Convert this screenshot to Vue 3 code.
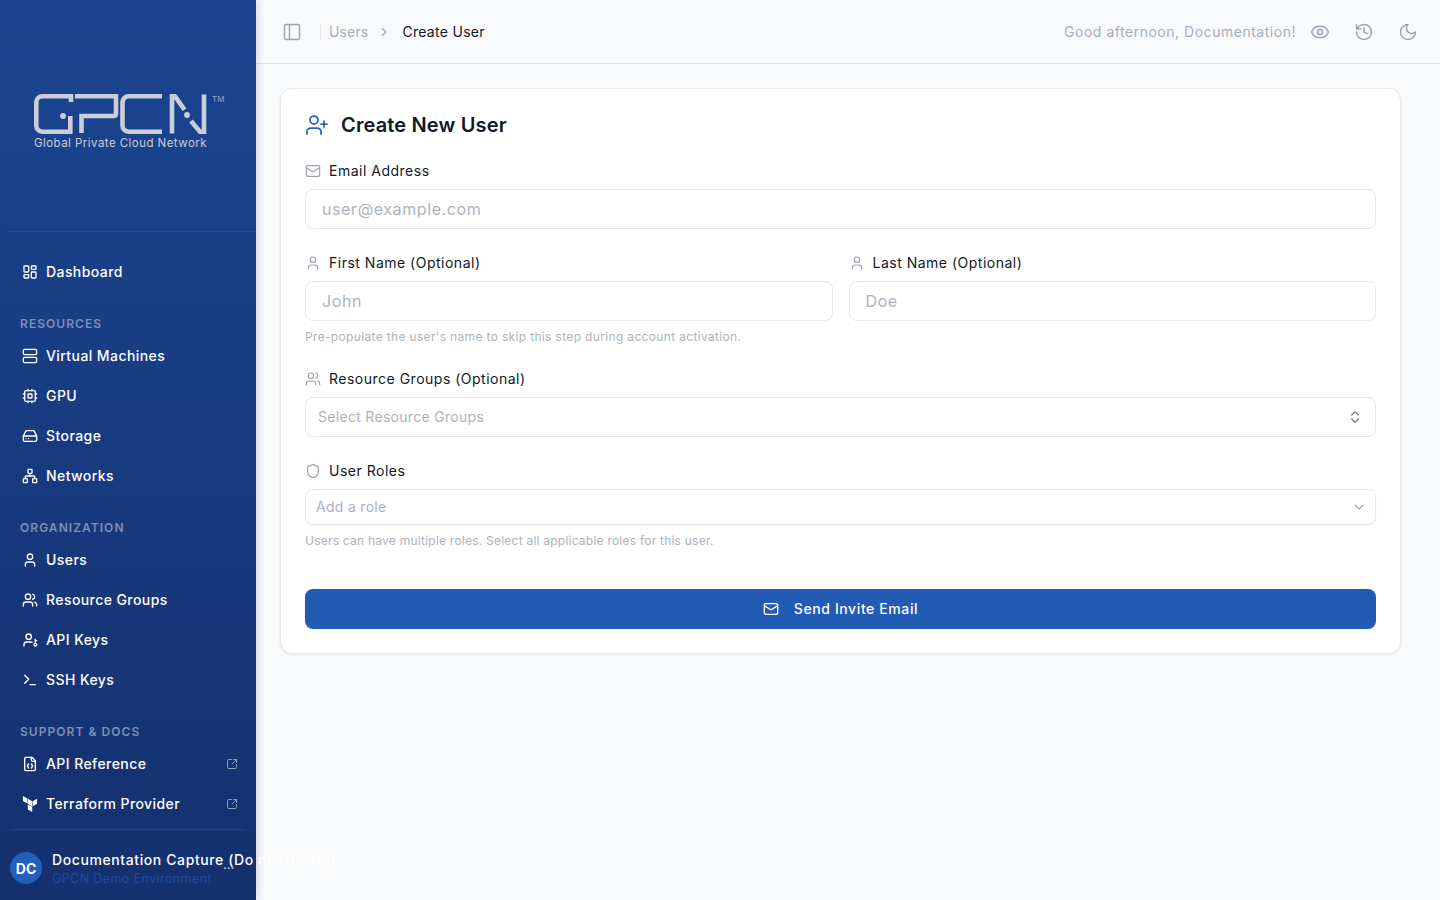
<script setup>
const icons = {
  panel: '<rect x="3" y="3" width="18" height="18" rx="2"/><path d="M9 3v18"/>',
  chevron: '<path d="m9 18 6-6-6-6"/>',
  eye: '<path d="M2.062 12.348a1 1 0 0 1 0-.696 10.75 10.75 0 0 1 19.876 0 1 1 0 0 1 0 .696 10.75 10.75 0 0 1-19.876 0"/><circle cx="12" cy="12" r="3"/>',
  history: '<path d="M3 12a9 9 0 1 0 9-9 9.75 9.75 0 0 0-6.74 2.74L3 8"/><path d="M3 3v5h5"/><path d="M12 7v5l4 2"/>',
  moon: '<path d="M12 3a6 6 0 0 0 9 9 9 9 0 1 1-9-9Z"/>',
  userPlus: '<path d="M16 21v-2a4 4 0 0 0-4-4H6a4 4 0 0 0-4 4v2"/><circle cx="9" cy="7" r="4"/><path d="M19 8v6"/><path d="M22 11h-6"/>',
  mail: '<rect x="2" y="4" width="20" height="16" rx="2"/><path d="m22 7-8.97 5.7a1.94 1.94 0 0 1-2.06 0L2 7"/>',
  user: '<path d="M19 21v-2a4 4 0 0 0-4-4H9a4 4 0 0 0-4 4v2"/><circle cx="12" cy="7" r="4"/>',
  users: '<path d="M16 21v-2a4 4 0 0 0-4-4H6a4 4 0 0 0-4 4v2"/><circle cx="9" cy="7" r="4"/><path d="M22 21v-2a4 4 0 0 0-3-3.87"/><path d="M16 3.13a4 4 0 0 1 0 7.75"/>',
  shield: '<path d="M20 13c0 5-3.5 7.5-7.66 8.95a1 1 0 0 1-.67-.01C7.5 20.5 4 18 4 13V6a1 1 0 0 1 1-1c2 0 4.5-1.2 6.24-2.72a1.17 1.17 0 0 1 1.52 0C14.51 3.81 17 5 19 5a1 1 0 0 1 1 1z"/>',
  updown: '<path d="m7 15 5 5 5-5"/><path d="m7 9 5-5 5 5"/>',
  down: '<path d="m6 9 6 6 6-6"/>',
  dashboard: '<rect x="3" y="3" width="7" height="9" rx="1"/><rect x="14" y="3" width="7" height="5" rx="1"/><rect x="14" y="12" width="7" height="9" rx="1"/><rect x="3" y="16" width="7" height="5" rx="1"/>',
  server: '<rect x="2" y="2" width="20" height="8" rx="2"/><rect x="2" y="14" width="20" height="8" rx="2"/>',
  cpu: '<rect x="4" y="4" width="16" height="16" rx="2"/><rect x="9" y="9" width="6" height="6" rx="1"/><path d="M15 2v2M15 20v2M2 15h2M2 9h2M20 15h2M20 9h2M9 2v2M9 20v2"/>',
  drive: '<path d="M22 12H2"/><path d="M5.45 5.11 2 12v6a2 2 0 0 0 2 2h16a2 2 0 0 0 2-2v-6l-3.45-6.89A2 2 0 0 0 16.76 4H7.24a2 2 0 0 0-1.79 1.11z"/><path d="M6 16h.01M10 16h.01"/>',
  network: '<rect x="16" y="16" width="6" height="6" rx="1"/><rect x="2" y="16" width="6" height="6" rx="1"/><rect x="9" y="2" width="6" height="6" rx="1"/><path d="M5 16v-3a1 1 0 0 1 1-1h12a1 1 0 0 1 1 1v3"/><path d="M12 12V8"/>',
  userKey: '<path d="M20 11v6"/><path d="M20 13h2"/><path d="M3 21v-2a4 4 0 0 1 4-4h6a4 4 0 0 1 2.072.578"/><circle cx="10" cy="7" r="4"/><circle cx="20" cy="19" r="2"/>',
  terminal: '<path d="m4 17 6-6-6-6"/><path d="M12 19h8"/>',
  fileCode: '<path d="M15 2H6a2 2 0 0 0-2 2v16a2 2 0 0 0 2 2h12a2 2 0 0 0 2-2V7Z"/><path d="M14 2v4a2 2 0 0 0 2 2h4"/><path d="M10 12a1 1 0 0 0-1 1v1a1 1 0 0 1-1 1 1 1 0 0 1 1 1v1a1 1 0 0 0 1 1"/><path d="M14 18a1 1 0 0 0 1-1v-1a1 1 0 0 1 1-1 1 1 0 0 1-1-1v-1a1 1 0 0 0-1-1"/>',
  terraform: '<path fill="currentColor" stroke="none" d="M1.44 0v7.575l6.561 3.79V3.787zm21.12 4.227l-6.561 3.791v7.574l6.56-3.787zM8.72 4.23v7.575l6.561 3.787V8.018zm0 8.405v7.575L15.28 24v-7.578z"/>',
  external: '<path d="M21 13v6a2 2 0 0 1-2 2H5a2 2 0 0 1-2-2V5a2 2 0 0 1 2-2h6"/><path d="m21 3-9 9"/><path d="M15 3h6v6"/>'
}

const navGroups = [
  { title: '', items: [{ label: 'Dashboard', icon: 'dashboard' }] },
  {
    title: 'Resources',
    items: [
      { label: 'Virtual Machines', icon: 'server' },
      { label: 'GPU', icon: 'cpu' },
      { label: 'Storage', icon: 'drive' },
      { label: 'Networks', icon: 'network' }
    ]
  },
  {
    title: 'Organization',
    items: [
      { label: 'Users', icon: 'user' },
      { label: 'Resource Groups', icon: 'users' },
      { label: 'API Keys', icon: 'userKey' },
      { label: 'SSH Keys', icon: 'terminal' }
    ]
  },
  {
    title: 'Support & Docs',
    items: [
      { label: 'API Reference', icon: 'fileCode', external: true },
      { label: 'Terraform Provider', icon: 'terraform', external: true }
    ]
  }
]
</script>

<template>
  <div class="layout">
    <aside class="sidebar">
      <div class="brand">
        <div class="logo">
          <svg class="logo-mark" viewBox="0 0 173 40" width="173" height="40" fill="none" stroke="currentColor" stroke-width="4.6">
            <path d="M37 8V2.3H8.3a6 6 0 0 0-6 6v23.4a6 6 0 0 0 6 6H36.3V22" />
            <circle cx="29" cy="22" r="2.9" fill="currentColor" stroke="none" />
            <path d="M41 2.3h41v17.7a2 2 0 0 1-2 2H47.5v17" />
            <path d="M128 2.3H94.5a6 6 0 0 0-6 6v23.4a6 6 0 0 0 6 6H128" />
            <path d="M138 39.5V2.3h3l9.5 13.5" />
            <circle cx="153" cy="21" r="2.9" fill="currentColor" stroke="none" />
            <path d="M157 27l9 10.700h4V0.500" />
          </svg>
          <span class="tm">TM</span>
          <div class="logo-text">Global Private Cloud Network</div>
        </div>
      </div>

      <nav class="nav">
        <div v-for="group in navGroups" :key="group.title" class="nav-group">
          <div v-if="group.title" class="nav-title">{{ group.title }}</div>
          <a v-for="item in group.items" :key="item.label" class="nav-item">
            <svg class="icon nav-icon" viewBox="0 0 24 24" v-html="icons[item.icon]"></svg>
            <span class="nudge">{{ item.label }}</span>
            <svg v-if="item.external" class="icon nav-ext" viewBox="0 0 24 24" v-html="icons.external"></svg>
          </a>
        </div>
      </nav>

      <div class="account">
        <div class="avatar">DC</div>
        <div class="account-text">
          <div class="account-name">Documentation Capture (Do not delete)</div>
          <div class="account-sub">GPCN Demo Environment</div>
        </div>
        <span class="account-dots">...</span>
      </div>
    </aside>

    <div class="main">
      <header class="topbar">
        <svg class="icon top-panel" viewBox="0 0 24 24" v-html="icons.panel"></svg>
        <span class="top-divider"></span>
        <span class="crumb">Users</span>
        <svg class="icon crumb-sep" viewBox="0 0 24 24" v-html="icons.chevron"></svg>
        <span class="crumb current">Create User</span>
        <span class="greeting">Good afternoon, Documentation!</span>
        <button class="top-btn"><svg class="icon" viewBox="0 0 24 24" v-html="icons.eye"></svg></button>
        <button class="top-btn"><svg class="icon" viewBox="0 0 24 24" v-html="icons.history"></svg></button>
        <button class="top-btn"><svg class="icon" viewBox="0 0 24 24" v-html="icons.moon"></svg></button>
      </header>

      <main class="content">
        <section class="card">
          <h1 class="card-title">
            <svg class="icon title-icon" viewBox="0 0 24 24" v-html="icons.userPlus"></svg>
            Create New User
          </h1>

          <div class="field">
            <label class="field-label">
              <svg class="icon label-icon" viewBox="0 0 24 24" v-html="icons.mail"></svg>
              <span class="nudge">Email Address</span>
            </label>
            <input class="text-input" placeholder="user@example.com" />
          </div>

          <div class="field">
            <div class="two-col">
              <div>
                <label class="field-label">
                  <svg class="icon label-icon" viewBox="0 0 24 24" v-html="icons.user"></svg>
                  <span class="nudge">First Name (Optional)</span>
                </label>
                <input class="text-input" placeholder="John" />
              </div>
              <div>
                <label class="field-label">
                  <svg class="icon label-icon" viewBox="0 0 24 24" v-html="icons.user"></svg>
                  <span class="nudge">Last Name (Optional)</span>
                </label>
                <input class="text-input" placeholder="Doe" />
              </div>
            </div>
            <p class="hint hint-name">Pre-populate the user's name to skip this step during account activation.</p>
          </div>

          <div class="field">
            <label class="field-label">
              <svg class="icon label-icon" viewBox="0 0 24 24" v-html="icons.users"></svg>
              <span class="nudge">Resource Groups (Optional)</span>
            </label>
            <div class="select">
              <span class="nudge">Select Resource Groups</span>
              <svg class="icon select-icon" viewBox="0 0 24 24" v-html="icons.updown"></svg>
            </div>
          </div>

          <div class="field">
            <label class="field-label">
              <svg class="icon label-icon" viewBox="0 0 24 24" v-html="icons.shield"></svg>
              <span class="nudge">User Roles</span>
            </label>
            <div class="select role-select">
              <span class="nudge">Add a role</span>
              <svg class="icon select-icon" viewBox="0 0 24 24" v-html="icons.down"></svg>
            </div>
            <p class="hint hint-roles">Users can have multiple roles. Select all applicable roles for this user.</p>
          </div>

          <button class="submit">
            <svg class="icon" viewBox="0 0 24 24" v-html="icons.mail"></svg>
            <span class="nudge">Send Invite Email</span>
          </button>
        </section>
      </main>
    </div>
  </div>
</template>

<style>
html,
body {
  margin: 0;
  background: #f9fafb;
}
</style>

<style scoped>
.layout {
  display: flex;
  height: 900px;
  overflow: hidden;
  font-family: Inter, "Liberation Sans", sans-serif;
  color: #111827;
}

.icon {
  width: 16px;
  height: 16px;
  fill: none;
  stroke: currentColor;
  stroke-width: 2;
  stroke-linecap: round;
  stroke-linejoin: round;
  flex-shrink: 0;
}

.nudge {
  margin-bottom: 2px;
}

/* sidebar */
.sidebar {
  width: 256px;
  flex-shrink: 0;
  display: flex;
  flex-direction: column;
  background: linear-gradient(180deg, #1c4591 0%, #14306e 100%);
  box-shadow: 2px 0 8px rgba(0, 0, 0, 0.14);
  position: relative;
  z-index: 2;
  color: #fff;
}

.brand {
  height: 231px;
  margin-left: 10px;
  border-bottom: 1px solid rgba(255, 255, 255, 0.07);
}

.logo {
  position: relative;
  padding: 94px 0 0 24px;
  color: #c9ced9;
}

.logo-mark {
  display: block;
}

.tm {
  position: absolute;
  left: 202px;
  top: 94px;
  font-size: 8px;
  color: #9aa7c4;
}

.logo-text {
  font-size: 11.5px;
  line-height: 16px;
  margin-top: 1px;
  letter-spacing: 0.45px;
  white-space: nowrap;
}

.nav {
  padding: 20px 10px 0;
  flex: 1;
}

.nav-title {
  height: 24px;
  margin-top: 20px;
  padding-left: 10px;
  font-size: 12px;
  line-height: 24px;
  font-weight: 600;
  letter-spacing: 1.05px;
  text-transform: uppercase;
  color: #7b8fb8;
}

.nav-item {
  display: flex;
  align-items: center;
  height: 40px;
  padding: 0 8px 0 12px;
  gap: 8px;
  font-size: 14px;
  font-weight: 500;
  letter-spacing: 0.42px;
  white-space: nowrap;
}

.nav-ext {
  width: 12px;
  height: 12px;
  margin-left: auto;
  opacity: 0.5;
}

.account {
  position: relative;
  height: 71px;
  margin: 0 10px;
  border-top: 1px solid rgba(255, 255, 255, 0.08);
  display: flex;
  align-items: center;
  padding-top: 6px;
  box-sizing: border-box;
  gap: 10px;
}

.avatar {
  width: 32px;
  height: 32px;
  border-radius: 50%;
  background: #2160bb;
  font-size: 14px;
  font-weight: 700;
  display: flex;
  align-items: center;
  justify-content: center;
  flex-shrink: 0;
}

.account-text {
  padding-top: 2px;
  white-space: nowrap;
}

.account-name {
  font-size: 14px;
  line-height: 18px;
  font-weight: 500;
  letter-spacing: 0.6px;
}

.account-sub {
  margin-top: 1px;
  font-size: 12.5px;
  line-height: 18px;
  letter-spacing: 0.4px;
  color: #1d4a9e;
}

.account-dots {
  position: absolute;
  left: 213px;
  top: 27px;
  font-size: 13px;
  line-height: 14px;
  color: #cbd5e1;
}

/* top bar */
.main {
  flex: 1;
  min-width: 0;
  display: flex;
  flex-direction: column;
}

.topbar {
  height: 64px;
  box-sizing: border-box;
  border-bottom: 1px solid #e5e7eb;
  display: flex;
  align-items: center;
  padding: 0 16px 0 26px;
  font-size: 14px;
}

.top-panel {
  width: 20px;
  height: 20px;
  color: #9ca3af;
  stroke-width: 1.75;
}

.top-divider {
  width: 1px;
  height: 16px;
  background: #e5e7eb;
  margin: 0 8px 0 18px;
}

.crumb {
  color: #a8adb8;
  letter-spacing: 0.15px;
}

.crumb.current {
  color: #111827;
  letter-spacing: 0.3px;
}

.crumb-sep {
  width: 14px;
  height: 14px;
  margin: 0 11px 0 9px;
  color: #9ca3af;
}

.greeting {
  margin-left: auto;
  margin-right: 8px;
  color: #a8adb8;
  letter-spacing: 0.52px;
}

.top-btn {
  width: 32px;
  height: 32px;
  padding: 0;
  border: 0;
  background: none;
  color: #9ca3af;
  display: flex;
  align-items: center;
  justify-content: center;
}

.top-btn + .top-btn {
  margin-left: 12px;
}

.top-btn .icon {
  width: 20px;
  height: 20px;
  stroke-width: 1.75;
}

/* form */
.content {
  padding: 24px 39px 0 24px;
}

.card {
  background: #fff;
  border: 1px solid #e5e7eb;
  border-radius: 12px;
  padding: 24px;
  box-shadow: 0 1px 3px rgba(0, 0, 0, 0.08);
}

.card-title {
  display: flex;
  align-items: center;
  gap: 12px;
  margin: 0 0 24px;
  font-size: 20px;
  line-height: 24px;
  font-weight: 600;
  letter-spacing: 0.15px;
}

.title-icon {
  width: 24px;
  height: 24px;
  color: #2563c9;
  stroke-width: 1.75;
}

.field {
  margin-bottom: 24px;
}

.field-label {
  display: flex;
  align-items: center;
  gap: 8px;
  height: 20px;
  margin-bottom: 8px;
  font-size: 14px;
  letter-spacing: 0.5px;
}

.label-icon {
  color: #9ca3af;
  stroke-width: 1.75;
}

.two-col {
  display: grid;
  grid-template-columns: 1fr 1fr;
  gap: 16px;
}

.text-input {
  display: block;
  width: 100%;
  height: 40px;
  box-sizing: border-box;
  border: 1px solid #e5e7eb;
  border-radius: 8px;
  padding: 0 16px;
  background: #fff;
  font-family: inherit;
  font-size: 16px;
  letter-spacing: 0.6px;
  outline: none;
}

.text-input::placeholder {
  color: #aeb2bd;
  opacity: 1;
}

.hint {
  margin: 8px 0 0;
  font-size: 12px;
  line-height: 16px;
  color: #aeb2bd;
}

.hint-name {
  letter-spacing: 0.34px;
}

.hint-roles {
  letter-spacing: 0.23px;
}

.select {
  display: flex;
  align-items: center;
  justify-content: space-between;
  height: 40px;
  box-sizing: border-box;
  border: 1px solid #e5e7eb;
  border-radius: 8px;
  padding: 0 12px;
  font-size: 14px;
  letter-spacing: 0.3px;
  color: #aeb2bd;
}

.select-icon {
  color: #6b7280;
  stroke-width: 1.75;
}

.role-select {
  height: 36px;
  padding: 0 8px 0 10px;
  box-shadow: 0 1px 2px rgba(0, 0, 0, 0.05);
}

.role-select .select-icon {
  color: #9ca3af;
}

.submit {
  display: flex;
  align-items: center;
  justify-content: center;
  gap: 15px;
  width: 100%;
  height: 40px;
  margin-top: 40px;
  border: 0;
  border-radius: 8px;
  background: #215bb3;
  color: #fff;
  font-family: inherit;
  font-size: 14px;
  font-weight: 500;
  letter-spacing: 0.6px;
}
</style>
